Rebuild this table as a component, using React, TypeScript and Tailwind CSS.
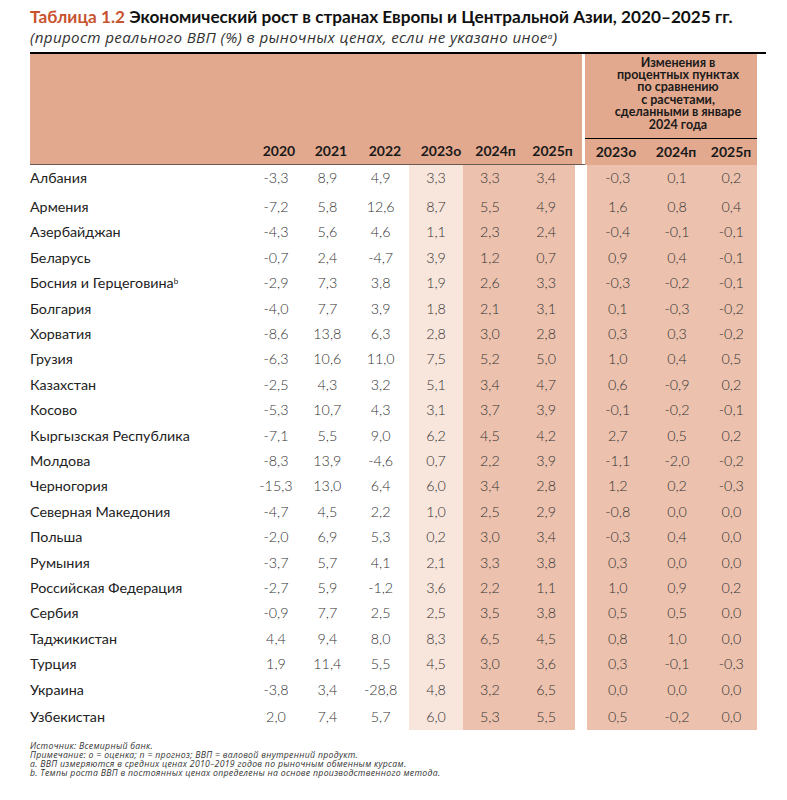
import React from "react";

type Row = { name: string; sup?: string; v: string[]; r: string[] };

const rows: Row[] = [
  { name: "Албания", v: ["-3,3", "8,9", "4,9", "3,3", "3,3", "3,4"], r: ["-0,3", "0,1", "0,2"] },
  { name: "Армения", v: ["-7,2", "5,8", "12,6", "8,7", "5,5", "4,9"], r: ["1,6", "0,8", "0,4"] },
  { name: "Азербайджан", v: ["-4,3", "5,6", "4,6", "1,1", "2,3", "2,4"], r: ["-0,4", "-0,1", "-0,1"] },
  { name: "Беларусь", v: ["-0,7", "2,4", "-4,7", "3,9", "1,2", "0,7"], r: ["0,9", "0,4", "-0,1"] },
  { name: "Босния и Герцеговина", sup: "b", v: ["-2,9", "7,3", "3,8", "1,9", "2,6", "3,3"], r: ["-0,3", "-0,2", "-0,1"] },
  { name: "Болгария", v: ["-4,0", "7,7", "3,9", "1,8", "2,1", "3,1"], r: ["0,1", "-0,3", "-0,2"] },
  { name: "Хорватия", v: ["-8,6", "13,8", "6,3", "2,8", "3,0", "2,8"], r: ["0,3", "0,3", "-0,2"] },
  { name: "Грузия", v: ["-6,3", "10,6", "11,0", "7,5", "5,2", "5,0"], r: ["1,0", "0,4", "0,5"] },
  { name: "Казахстан", v: ["-2,5", "4,3", "3,2", "5,1", "3,4", "4,7"], r: ["0,6", "-0,9", "0,2"] },
  { name: "Косово", v: ["-5,3", "10,7", "4,3", "3,1", "3,7", "3,9"], r: ["-0,1", "-0,2", "-0,1"] },
  { name: "Кыргызская Республика", v: ["-7,1", "5,5", "9,0", "6,2", "4,5", "4,2"], r: ["2,7", "0,5", "0,2"] },
  { name: "Молдова", v: ["-8,3", "13,9", "-4,6", "0,7", "2,2", "3,9"], r: ["-1,1", "-2,0", "-0,2"] },
  { name: "Черногория", v: ["-15,3", "13,0", "6,4", "6,0", "3,4", "2,8"], r: ["1,2", "0,2", "-0,3"] },
  { name: "Северная Македония", v: ["-4,7", "4,5", "2,2", "1,0", "2,5", "2,9"], r: ["-0,8", "0,0", "0,0"] },
  { name: "Польша", v: ["-2,0", "6,9", "5,3", "0,2", "3,0", "3,4"], r: ["-0,3", "0,4", "0,0"] },
  { name: "Румыния", v: ["-3,7", "5,7", "4,1", "2,1", "3,3", "3,8"], r: ["0,3", "0,0", "0,0"] },
  { name: "Российская Федерация", v: ["-2,7", "5,9", "-1,2", "3,6", "2,2", "1,1"], r: ["1,0", "0,9", "0,2"] },
  { name: "Сербия", v: ["-0,9", "7,7", "2,5", "2,5", "3,5", "3,8"], r: ["0,5", "0,5", "0,0"] },
  { name: "Таджикистан", v: ["4,4", "9,4", "8,0", "8,3", "6,5", "4,5"], r: ["0,8", "1,0", "0,0"] },
  { name: "Турция", v: ["1,9", "11,4", "5,5", "4,5", "3,0", "3,6"], r: ["0,3", "-0,1", "-0,3"] },
  { name: "Украина", v: ["-3,8", "3,4", "-28,8", "4,8", "3,2", "6,5"], r: ["0,0", "0,0", "0,0"] },
  { name: "Узбекистан", v: ["2,0", "7,4", "5,7", "6,0", "5,3", "5,5"], r: ["0,5", "-0,2", "0,0"] },
];

const leftW = ["w-[54px]", "w-[50px]", "w-[58px]", "w-[54px]", "w-[55px]", "w-[59px]"];
const leftBg = ["", "", "", "bg-[#f8e5dc]", "bg-[#ecc2ae]", "bg-[#ecc2ae]"];
const rightW = ["w-[62px]", "w-[58px]", "w-[52px]"];

export default function App() {
  return (
    <div className="w-[787px] h-[800px] bg-white px-[30px] pt-[5px] text-[#2a2a2a]" style={{ fontFamily: "Lato, 'Open Sans', sans-serif" }}>
      <div className="h-[47px]">
        <div className="text-[17.2px] font-bold leading-[23px] text-[#111] whitespace-nowrap">
          <span className="text-[#c8532f]">Таблица 1.2</span> Экономический рост в странах Европы и Центральной Азии, 2020–2025 гг.
        </div>
        <div className="text-[15.2px] italic leading-[19px] tracking-[0.35px] text-[#333] whitespace-nowrap" style={{ fontFamily: "'Open Sans', sans-serif" }}>
          (прирост реального ВВП (%) в рыночных ценах, если не указано иное<sup className="text-[8px]">a</sup>)
        </div>
      </div>
      <div className="w-[736px] h-[1.5px] bg-black" />
      {/* header */}
      <div className="flex h-[111px]">
        <div className="w-[552px] bg-[#e3a98e] border-b border-[#6b5a52] flex items-end">
          <div className="w-[222px]" />
          {["2020", "2021", "2022", "2023о", "2024п", "2025п"].map((y, i) => (
            <div key={y} className={`${leftW[i]} text-center text-[14px] font-bold leading-[16px] pb-[5px] text-[#1a1a1a]`}>{y}</div>
          ))}
        </div>
        <div className="w-[12px] border-b border-[#6b5a52]" />
        <div className="w-[172px] bg-[#e3a98e] flex flex-col">
          <div className="h-[85px] border-b-[1.5px] border-black pl-[14px] pt-[3px] text-center text-[12.5px] font-bold leading-[12.4px] text-[#1a1a1a]">
            Изменения в<br />процентных пунктах<br />по сравнению<br />с расчетами,<br />сделанными в январе<br />2024 года
          </div>
          <div className="flex flex-1 items-center">
            {["2023о", "2024п", "2025п"].map((y, i) => (
              <div key={y} className={`${rightW[i]} text-center text-[14px] font-bold leading-[16px] pt-[1px] text-[#1a1a1a]`}>{y}</div>
            ))}
          </div>
        </div>
      </div>
      {/* body */}
      <div className="flex flex-col">
        {rows.map((row, ri) => {
          const first = ri === 0;
          const last = ri === rows.length - 1;
          const h = first ? "h-[29.4px] pb-[3px]" : last ? "h-[28.2px] pt-[2px]" : "h-[25.42px]";
          return (
            <div key={row.name} className="flex">
              <div className={`w-[222px] flex items-center ${h} text-[14.3px] text-[#222]`}>
                <span>
                  {row.name}
                  {row.sup && <sup className="text-[8px]">{row.sup}</sup>}
                </span>
              </div>
              {row.v.map((v, i) => (
                <div key={i} className={`${leftW[i]} ${leftBg[i]} ${h} flex items-center justify-center text-[14.3px] font-light text-[#333]`}>
                  {v}
                </div>
              ))}
              <div className="w-[12px]" />
              {row.r.map((v, i) => (
                <div key={i} className={`${rightW[i]} bg-[#ecc2ae] ${h} flex items-center justify-center text-[14.3px] font-light text-[#333]`}>
                  {v}
                </div>
              ))}
            </div>
          );
        })}
      </div>
      <div className="mt-[12px] text-[8.7px] italic leading-[9px] tracking-[0.3px] text-[#333]" style={{ fontFamily: "'Open Sans', sans-serif" }}>
        <div>Источник: Всемирный банк.</div>
        <div>Примечание: о = оценка; п = прогноз; ВВП = валовой внутренний продукт.</div>
        <div>a. ВВП измеряются в средних ценах 2010–2019 годов по рыночным обменным курсам.</div>
        <div>b. Темпы роста ВВП в постоянных ценах определены на основе производственного метода.</div>
      </div>
    </div>
  );
}
